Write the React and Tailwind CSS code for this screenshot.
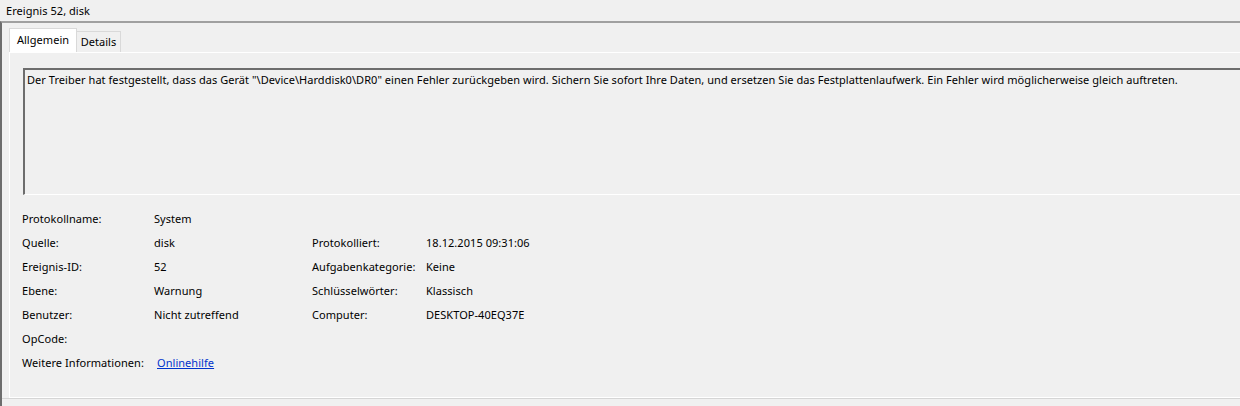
import React from 'react';

const rows = [
    ["Protokollname:", "System", "", ""],
    ["Quelle:", "disk", "Protokolliert:", "18.12.2015 09:31:06"],
    ["Ereignis-ID:", "52", "Aufgabenkategorie:", "Keine"],
    ["Ebene:", "Warnung", "Schlüsselwörter:", "Klassisch"],
    ["Benutzer:", "Nicht zutreffend", "Computer:", "DESKTOP-40EQ37E"],
    ["OpCode:", "", "", ""],
];

export default function App() {
    return (
        <div className="w-[1240px] h-[406px] overflow-hidden bg-[#f0f0f0] text-[11px] leading-[16px] tracking-[0.05px] text-black font-['Segoe_UI','Noto_Sans',sans-serif]">
            {/* Title */}
            <div className="h-[21px] pl-[6px] flex items-center">Ereignis 52, disk</div>

            {/* Frame */}
            <div className="w-[1300px] border-t-2 border-l-2 border-t-[#a0a0a0] border-l-[#6d6d6d] pl-[7px] pt-[5px]">
                {/* Tabs */}
                <div className="flex items-end">
                    <div className="h-[24px] w-[68px] flex items-center justify-center bg-white border border-b-0 border-[#d9d9d9] pb-[2px]">Allgemein</div>
                    <div className="h-[21px] w-[44px] flex items-center justify-center bg-[#f0f0f0] border border-l-0 border-b-0 border-[#d9d9d9]">Details</div>
                </div>

                {/* Panel */}
                <div className="h-[346px] border border-white bg-[#f0f0f0] pl-[13px] pt-[15px]">
                    <div className="h-[127px] border-t-2 border-l-2 border-t-[#6d6d6d] border-l-[#6d6d6d] border-b border-b-white px-[2px] pt-[2px]">
                        Der Treiber hat festgestellt, dass das Gerät "\Device\Harddisk0\DR0" einen Fehler zurückgeben wird. Sichern Sie sofort Ihre Daten, und ersetzen Sie das Festplattenlaufwerk. Ein Fehler wird möglicherweise gleich auftreten.
                    </div>

                    <div className="-ml-[1px] mt-[12px] grid grid-cols-[132px_158px_114px_auto] auto-rows-[24px] items-center">
                        {rows.map((r, i) => (
                            <React.Fragment key={i}>
                                <div>{r[0]}</div>
                                <div>{r[1]}</div>
                                <div>{r[2]}</div>
                                <div>{r[3]}</div>
                            </React.Fragment>
                        ))}
                        <div>Weitere Informationen:</div>
                        <div className="pl-[3px]"><a href="#" className="text-[#0033cc] underline">Onlinehilfe</a></div>
                    </div>
                </div>
                <div className="-ml-[7px] border-t border-[#d5d5d5] h-[8px]"></div>
            </div>
        </div>
    );
}
